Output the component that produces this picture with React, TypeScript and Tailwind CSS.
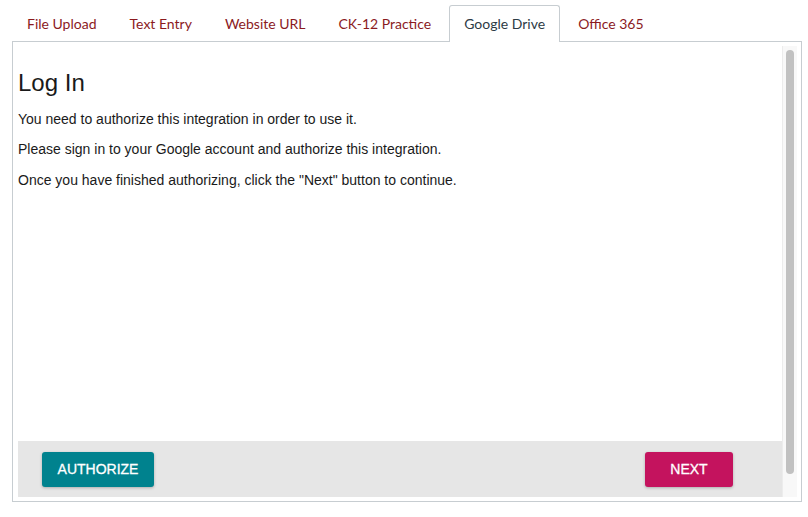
export default function App() {
  const tabs = ["File Upload", "Text Entry", "Website URL", "CK-12 Practice", "Google Drive", "Office 365"];
  const active = "Google Drive";

  return (
    <div className="h-[517px] w-[808px] bg-white pt-[5px]">
      {/* tab strip */}
      <ul className="relative z-10 ml-[12px] flex h-[36px] gap-[3px] font-['Lato',sans-serif] text-[14px]">
        {tabs.map((t) => (
          <li
            key={t}
            className={
              t === active
                ? "flex h-[37px] items-center rounded-t-[3px] border border-b-0 border-[#c7cdd1] bg-white px-[14px] pb-[1px] text-[#2d3b45]"
                : "flex h-[36px] items-center px-[15px] text-[#8b1a1e]"
            }
          >
            {t}
          </li>
        ))}
      </ul>

      {/* panel */}
      <div className="mx-[12px] h-[461px] w-[790px] border border-[#c7cdd1] p-[4px] pl-[5px]">
        <div className="flex h-full">
          <div className="flex flex-1 flex-col font-['Liberation_Sans',Arial,sans-serif] text-[#1a1a1a]">
            <div className="flex-1 pt-[23px]">
              <h2 className="text-[24px] leading-[28px]">Log In</h2>
              <p className="mt-[14px] text-[14px] leading-[16px]">You need to authorize this integration in order to use it.</p>
              <p className="mt-[14px] text-[14px] leading-[16px]">Please sign in to your Google account and authorize this integration.</p>
              <p className="mt-[15px] text-[14px] leading-[16px]">Once you have finished authorizing, click the "Next" button to continue.</p>
            </div>
            <div className="flex h-[56px] items-center justify-between bg-[#e6e6e6] pl-[24px] pr-[49px]">
              <button className="h-[35px] w-[112px] rounded-[3px] bg-[#00828e] text-[14px] text-white shadow-[0_1px_3px_rgba(0,0,0,0.25)] [-webkit-text-stroke:0.3px_white]">
                AUTHORIZE
              </button>
              <button className="h-[35px] w-[88px] rounded-[3px] bg-[#c4135e] text-[14px] text-white shadow-[0_1px_3px_rgba(0,0,0,0.25)] [-webkit-text-stroke:0.3px_white]">
                NEXT
              </button>
            </div>
          </div>

          {/* scrollbar */}
          <div className="flex w-[15px] justify-center border-l border-[#ececec] bg-[#f8f8f8] pt-[4px]">
            <div className="h-[424px] w-[8px] rounded-full bg-[#c1c1c1]" />
          </div>
        </div>
      </div>
    </div>
  );
}
